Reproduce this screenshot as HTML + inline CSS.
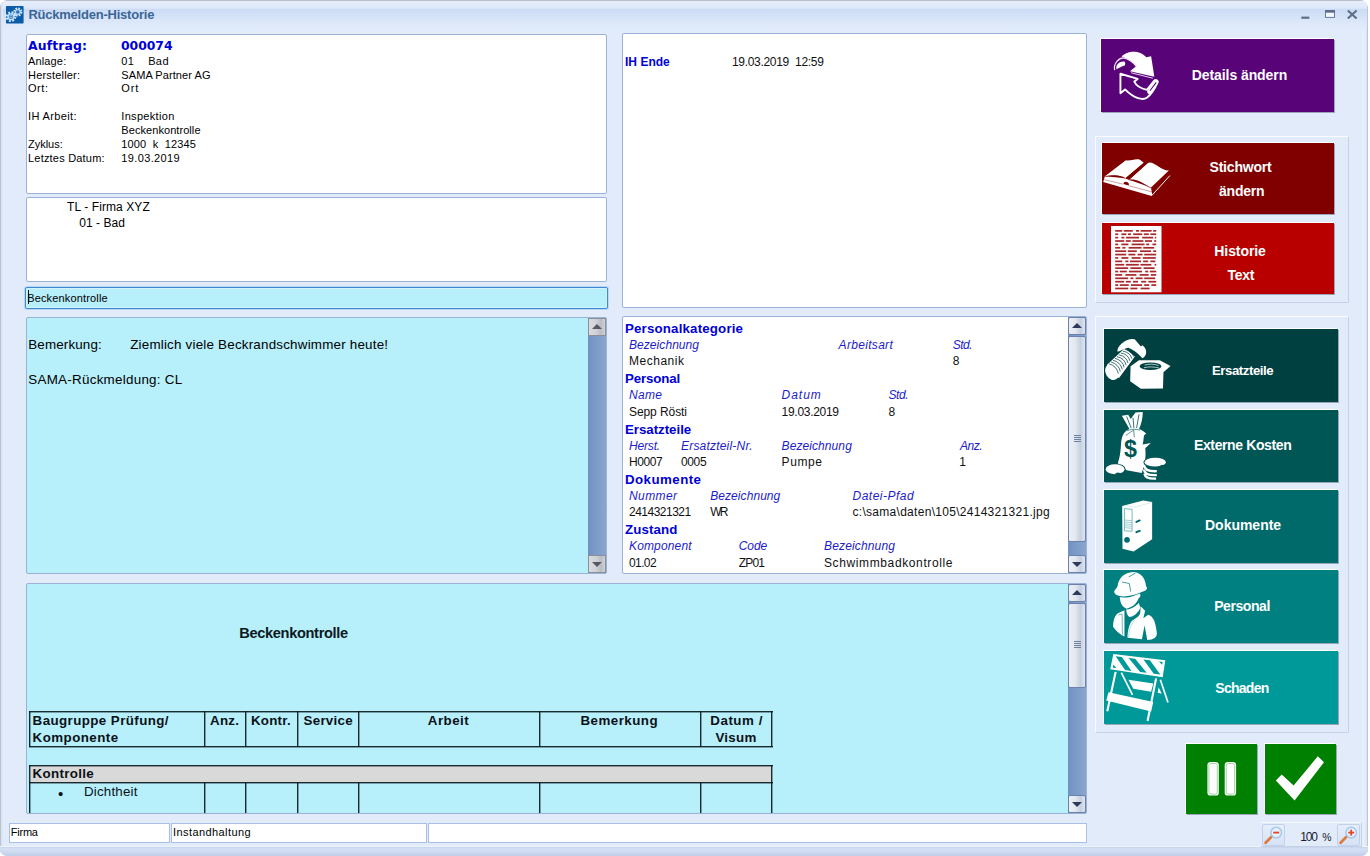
<!DOCTYPE html>
<html lang="de"><head><meta charset="utf-8"><title>Rückmelden-Historie</title>
<style>
*{box-sizing:border-box;margin:0;padding:0}
html,body{width:1370px;height:856px;overflow:hidden;background:#fff}
body{position:relative;font-family:"Liberation Sans",sans-serif;font-size:11px;color:#000}
.abs{position:absolute}
#win{position:absolute;left:0;top:0;width:1368px;height:856px;border-radius:8px 8px 7px 7px;background:#e1ebfa;overflow:hidden}
#tbar{position:absolute;left:0;top:0;width:1370px;height:32px;background:linear-gradient(#b9bec9 0,#b9bec9 1px,#e6eefb 1px,#e2ecfb 3px,#dfe9fa 8px,#cddcf5 9.5px,#d0dff6 13px,#dbe7f9 21px,#e1ebfa 30px)}
#lband{position:absolute;left:0;top:0;width:3px;height:856px;background:linear-gradient(90deg,#bbc4d6 0,#bbc4d6 1px,#d3ddef 1px,#dbe5f5 2px,#e1ebfa 3px)}
#rband{position:absolute;left:1361px;top:30px;width:7px;height:826px;background:linear-gradient(90deg,#e1ebfa 0,#e7effb 2px,#e2ebf8 5px,#d2dcee 6px,#bcc6d8 6px,#bcc6d8 7px)}
#bband{position:absolute;left:0;top:846px;width:1370px;height:10px;background:linear-gradient(#eef4fc 0,#eef4fc 1px,#c9d5ea 1px,#ccd8ee 2px,#d3e0f4 2px,#cddaf1 6px,#bfcde7 10px)}
#title{position:absolute;left:28px;top:7px;font-weight:bold;font-size:13px;line-height:16px;color:#3f6a9e;letter-spacing:-.1px;white-space:nowrap}
.panel{position:absolute;background:#fff;border:1px solid #9bb1d6;border-radius:2px}
.cy{background:#b7effb}
.t{position:absolute;white-space:pre;line-height:14px}
.tah{font-size:11px}
.seg{font-size:12px}
.blue{color:#0a0ac8}
.btn{position:absolute;color:#fff;font-weight:bold;font-size:13.5px;text-align:center;box-shadow:-1px -1px 0 #fff,1px 1px 0 #9aa6bb}
.btn span{position:absolute;left:0;width:100%;white-space:nowrap}
.grp{position:absolute;border:1px solid #c4d1e7;border-top-color:#fafcff;border-left-color:#fafcff;border-radius:2px}
.sb{position:absolute;width:18px;background:linear-gradient(90deg,#7091c1 0,#7b9ac7 40%,#89a6cf 100%)}
.sbb{position:absolute;left:0;width:18px;height:18px;border:1px solid #6b81ab;border-radius:2px;background:linear-gradient(90deg,#eceff5 0,#e3e7ef 40%,#c6d0e0 72%,#dfe4ee 100%)}
.sbg{position:absolute;left:0;width:18px;height:18px;border:1px solid #8b8f98;background:linear-gradient(90deg,#d9dbe0 0,#cfd1d6 45%,#b9bcc3 75%,#d0d2d8 100%)}
.tri{position:absolute;left:3px;width:0;height:0;border-left:5px solid transparent;border-right:5px solid transparent}
.st{position:absolute;top:823px;height:20px;background:#fff;border:1px solid #a9c0e4;font-size:11px;line-height:17px;padding-left:1px;white-space:nowrap}
table.rt{position:absolute;border-collapse:collapse;font-size:13.4px;line-height:17px}
table.rt td{border:1.4px solid #0c1a20;vertical-align:top;padding:1px 3px 0 3px;font-weight:bold;text-align:center;white-space:nowrap}
svg{position:absolute;overflow:visible}
</style></head>
<body>
<div id="win">
<div id="tbar"></div><div id="lband"></div><div id="rband"></div><div id="bband"></div><div class="abs" style="left:1367px;top:6px;width:1px;height:26px;background:#bcc6d8"></div>
<svg style="left:6.2px;top:6.3px" width="17.6" height="17.6" viewBox="0 0 18 18"><rect x="0" y="0" width="18" height="18" rx=".8" fill="#0a5ba8"/>
<circle cx="5.1" cy="10.9" r="4.2" fill="none" stroke="#cfe7fa" stroke-width="2.6" stroke-dasharray="1.9 1.4"/>
<circle cx="5.1" cy="10.9" r="3.6" fill="#c3e0f8"/><circle cx="5.1" cy="10.9" r="2.3" fill="#3d88cf"/><circle cx="5.1" cy="10.9" r="1.4" fill="#a9d2f4"/><circle cx="5.1" cy="10.9" r=".7" fill="#0a4f96"/>
<circle cx="12.1" cy="6.1" r="3.5" fill="none" stroke="#cfe7fa" stroke-width="2.4" stroke-dasharray="1.7 1.05"/>
<circle cx="12.1" cy="6.1" r="2.9" fill="#c3e0f8"/><circle cx="12.1" cy="6.1" r="1.9" fill="#3d88cf"/><rect x="11" y="5.7" width="2.2" height=".9" fill="#0a4f96"/></svg>
<div class="t" style="left:28.40px;top:6.00px;font-size:13px;line-height:17px;color:#3b6596;font-weight:bold;letter-spacing:-0.224px;">Rückmelden-Historie</div>
<svg style="left:1300px;top:8px" width="60" height="14" viewBox="0 0 60 14"><rect x="1.3" y="8.6" width="8" height="2.2" fill="#5f6e88"/>
<rect x="25.5" y="2.6" width="9" height="6.8" fill="#f4f8fe" stroke="#6b7b9a" stroke-width="1"/><rect x="25" y="2.1" width="10" height="2.6" fill="#5f6e88"/>
<path d="M47.8 2.4 L56.6 10.6 M56.6 2.4 L47.8 10.6" stroke="#5f6e88" stroke-width="2.1" fill="none"/></svg>
<div class="panel" style="left:26px;top:34px;width:581px;height:160px"></div>
<div class="panel" style="left:26px;top:197px;width:581px;height:85px"></div>
<div class="panel cy" style="left:25px;top:287px;width:583px;height:22px;border:1px solid #3f89d2;box-shadow:inset 0 0 0 1px #d2f3fc,0 0 0 1px #b9d6f3"></div>
<div class="panel cy" style="left:26px;top:317px;width:581px;height:257px"></div>
<div class="panel" style="left:622px;top:33px;width:465px;height:275px"></div>
<div class="panel" style="left:622px;top:316px;width:465px;height:258px"></div>
<div class="panel cy" style="left:26px;top:583px;width:1061px;height:231px"></div>
<div class="t" style="left:28.00px;top:37.81px;font-size:12.4px;line-height:16px;color:#0000d8;font-family:'DejaVu Sans','Liberation Sans',sans-serif;font-weight:bold;letter-spacing:0.133px;">Auftrag:</div>
<div class="t" style="left:121.00px;top:37.81px;font-size:12.4px;line-height:16px;color:#0000d8;font-family:'DejaVu Sans','Liberation Sans',sans-serif;font-weight:bold;letter-spacing:-0.034px;">000074</div>
<div class="t" style="left:28.00px;top:53.79px;font-size:11px;line-height:14px;color:#000;letter-spacing:0.148px;">Anlage:</div>
<div class="t" style="left:121.30px;top:53.79px;font-size:11px;line-height:14px;color:#000;letter-spacing:0.396px;">01    Bad</div>
<div class="t" style="left:28.00px;top:67.61px;font-size:11px;line-height:14px;color:#000;letter-spacing:0.187px;">Hersteller:</div>
<div class="t" style="left:121.30px;top:67.61px;font-size:11px;line-height:14px;color:#000;letter-spacing:0.083px;">SAMA Partner AG</div>
<div class="t" style="left:28.00px;top:81.43px;font-size:11px;line-height:14px;color:#000;letter-spacing:0.554px;">Ort:</div>
<div class="t" style="left:121.30px;top:81.43px;font-size:11px;line-height:14px;color:#000;letter-spacing:0.810px;">Ort</div>
<div class="t" style="left:28.00px;top:109.07px;font-size:11px;line-height:14px;color:#000;letter-spacing:0.373px;">IH Arbeit:</div>
<div class="t" style="left:121.30px;top:109.07px;font-size:11px;line-height:14px;color:#000;letter-spacing:0.317px;">Inspektion</div>
<div class="t" style="left:121.30px;top:122.89px;font-size:11px;line-height:14px;color:#000;letter-spacing:0.067px;">Beckenkontrolle</div>
<div class="t" style="left:28.00px;top:136.71px;font-size:11px;line-height:14px;color:#000;letter-spacing:-0.023px;">Zyklus:</div>
<div class="t" style="left:121.30px;top:136.71px;font-size:11px;line-height:14px;color:#000;letter-spacing:0.139px;">1000  k  12345</div>
<div class="t" style="left:28.00px;top:150.53px;font-size:11px;line-height:14px;color:#000;letter-spacing:0.202px;">Letztes Datum:</div>
<div class="t" style="left:121.30px;top:150.53px;font-size:11px;line-height:14px;color:#000;letter-spacing:0.372px;">19.03.2019</div>
<div class="t" style="left:67.10px;top:199.34px;font-size:12px;line-height:16px;color:#000;letter-spacing:0.088px;">TL - Firma XYZ</div>
<div class="t" style="left:79.20px;top:215.44px;font-size:12px;line-height:16px;color:#000;letter-spacing:0.063px;">01 - Bad</div>
<div class="abs" style="left:27px;top:289px;width:200px;height:17px;overflow:hidden"><div class="t" style="left:0.20px;top:1.79px;font-size:11px;line-height:14px;color:#000;letter-spacing:0.160px;">Beckenkontrolle</div>
</div>
<div class="abs" style="left:27.5px;top:290px;width:1.2px;height:14px;background:#141414"></div>
<div class="t" style="left:28.30px;top:336.36px;font-size:13.4px;line-height:17px;color:#000;letter-spacing:0.139px;">Bemerkung:</div>
<div class="t" style="left:130.20px;top:336.36px;font-size:13.4px;line-height:17px;color:#000;letter-spacing:0.205px;">Ziemlich viele Beckrandschwimmer heute!</div>
<div class="t" style="left:28.30px;top:370.56px;font-size:13.4px;line-height:17px;color:#000;letter-spacing:0.266px;">SAMA-Rückmeldung: CL</div>
<div class="t" style="left:625.00px;top:54.14px;font-size:12px;line-height:16px;color:#0000d8;font-weight:bold;letter-spacing:0.021px;">IH Ende</div>
<div class="t" style="left:731.90px;top:54.14px;font-size:12px;line-height:16px;color:#111;letter-spacing:-0.297px;">19.03.2019  12:59</div>
<div class="t" style="left:625.00px;top:319.99px;font-size:13.3px;line-height:17px;color:#0000d8;font-weight:bold;letter-spacing:0.168px;">Personalkategorie</div>
<div class="t" style="left:629.00px;top:337.14px;font-size:12px;line-height:16px;color:#1c1ccc;font-style:italic;letter-spacing:0.062px;">Bezeichnung</div>
<div class="t" style="left:629.00px;top:353.44px;font-size:12px;line-height:16px;color:#111;letter-spacing:0.517px;">Mechanik</div>
<div class="t" style="left:838.60px;top:337.14px;font-size:12px;line-height:16px;color:#1c1ccc;font-style:italic;letter-spacing:0.313px;">Arbeitsart</div>
<div class="t" style="left:952.80px;top:337.14px;font-size:12px;line-height:16px;color:#1c1ccc;font-style:italic;letter-spacing:-0.516px;">Std.</div>
<div class="t" style="left:952.80px;top:353.44px;font-size:12px;line-height:16px;color:#111;">8</div>
<div class="t" style="left:625.00px;top:370.29px;font-size:13.3px;line-height:17px;color:#0000d8;font-weight:bold;letter-spacing:-0.140px;">Personal</div>
<div class="t" style="left:629.00px;top:387.44px;font-size:12px;line-height:16px;color:#1c1ccc;font-style:italic;letter-spacing:0.328px;">Name</div>
<div class="t" style="left:629.00px;top:403.74px;font-size:12px;line-height:16px;color:#111;letter-spacing:-0.078px;">Sepp Rösti</div>
<div class="t" style="left:781.60px;top:387.44px;font-size:12px;line-height:16px;color:#1c1ccc;font-style:italic;letter-spacing:0.965px;">Datum</div>
<div class="t" style="left:781.60px;top:403.74px;font-size:12px;line-height:16px;color:#111;letter-spacing:-0.296px;">19.03.2019</div>
<div class="t" style="left:888.40px;top:387.44px;font-size:12px;line-height:16px;color:#1c1ccc;font-style:italic;letter-spacing:-0.383px;">Std.</div>
<div class="t" style="left:888.40px;top:403.74px;font-size:12px;line-height:16px;color:#111;">8</div>
<div class="t" style="left:625.00px;top:420.59px;font-size:13.3px;line-height:17px;color:#0000d8;font-weight:bold;letter-spacing:-0.033px;">Ersatzteile</div>
<div class="t" style="left:629.00px;top:437.74px;font-size:12px;line-height:16px;color:#1c1ccc;font-style:italic;letter-spacing:-0.161px;">Herst.</div>
<div class="t" style="left:629.00px;top:454.04px;font-size:12px;line-height:16px;color:#111;letter-spacing:-0.391px;">H0007</div>
<div class="t" style="left:681.00px;top:437.74px;font-size:12px;line-height:16px;color:#1c1ccc;font-style:italic;letter-spacing:0.201px;">Ersatzteil-Nr.</div>
<div class="t" style="left:681.00px;top:454.04px;font-size:12px;line-height:16px;color:#111;letter-spacing:-0.367px;">0005</div>
<div class="t" style="left:781.60px;top:437.74px;font-size:12px;line-height:16px;color:#1c1ccc;font-style:italic;letter-spacing:0.082px;">Bezeichnung</div>
<div class="t" style="left:781.60px;top:454.04px;font-size:12px;line-height:16px;color:#111;letter-spacing:0.571px;">Pumpe</div>
<div class="t" style="left:959.90px;top:437.74px;font-size:12px;line-height:16px;color:#1c1ccc;font-style:italic;letter-spacing:-0.471px;">Anz.</div>
<div class="t" style="left:959.30px;top:454.04px;font-size:12px;line-height:16px;color:#111;">1</div>
<div class="t" style="left:625.00px;top:470.89px;font-size:13.3px;line-height:17px;color:#0000d8;font-weight:bold;letter-spacing:0.448px;">Dokumente</div>
<div class="t" style="left:629.00px;top:488.04px;font-size:12px;line-height:16px;color:#1c1ccc;font-style:italic;letter-spacing:0.397px;">Nummer</div>
<div class="t" style="left:629.00px;top:504.34px;font-size:12px;line-height:16px;color:#111;letter-spacing:-0.505px;">2414321321</div>
<div class="t" style="left:710.20px;top:488.04px;font-size:12px;line-height:16px;color:#1c1ccc;font-style:italic;letter-spacing:0.072px;">Bezeichnung</div>
<div class="t" style="left:710.20px;top:504.34px;font-size:12px;line-height:16px;color:#111;letter-spacing:-1.692px;">WR</div>
<div class="t" style="left:852.50px;top:488.04px;font-size:12px;line-height:16px;color:#1c1ccc;font-style:italic;letter-spacing:0.488px;">Datei-Pfad</div>
<div class="t" style="left:852.50px;top:504.34px;font-size:12px;line-height:16px;color:#111;letter-spacing:0.289px;">c:\sama\daten\105\2414321321.jpg</div>
<div class="t" style="left:625.00px;top:521.19px;font-size:13.3px;line-height:17px;color:#0000d8;font-weight:bold;letter-spacing:0.113px;">Zustand</div>
<div class="t" style="left:629.00px;top:538.34px;font-size:12px;line-height:16px;color:#1c1ccc;font-style:italic;letter-spacing:0.150px;">Komponent</div>
<div class="t" style="left:629.00px;top:554.64px;font-size:12px;line-height:16px;color:#111;letter-spacing:-0.606px;">01.02</div>
<div class="t" style="left:738.70px;top:538.34px;font-size:12px;line-height:16px;color:#1c1ccc;font-style:italic;letter-spacing:-0.064px;">Code</div>
<div class="t" style="left:738.70px;top:554.64px;font-size:12px;line-height:16px;color:#111;letter-spacing:-0.793px;">ZP01</div>
<div class="t" style="left:824.00px;top:538.34px;font-size:12px;line-height:16px;color:#1c1ccc;font-style:italic;letter-spacing:0.152px;">Bezeichnung</div>
<div class="t" style="left:824.00px;top:554.64px;font-size:12px;line-height:16px;color:#111;letter-spacing:0.618px;">Schwimmbadkontrolle</div>
<div class="t" style="left:239.20px;top:624.14px;font-size:14.6px;line-height:19px;color:#0a1a22;font-weight:bold;letter-spacing:-0.328px;">Beckenkontrolle</div>
<div class="abs" style="left:30px;top:766px;width:741px;height:17px;background:#d9d9d9"></div>
<div class="abs" style="left:29px;top:711px;width:744px;height:2px;background:linear-gradient(rgba(12,26,32,.92) 50%,rgba(12,26,32,.38) 50%)"></div>
<div class="abs" style="left:29px;top:746px;width:744px;height:2px;background:linear-gradient(rgba(12,26,32,.92) 50%,rgba(12,26,32,.38) 50%)"></div>
<div class="abs" style="left:29px;top:765px;width:744px;height:2px;background:linear-gradient(rgba(12,26,32,.92) 50%,rgba(12,26,32,.38) 50%)"></div>
<div class="abs" style="left:29px;top:782px;width:744px;height:2px;background:linear-gradient(rgba(12,26,32,.92) 50%,rgba(12,26,32,.38) 50%)"></div>
<div class="abs" style="left:29px;top:711px;width:2px;height:36px;background:linear-gradient(90deg,rgba(12,26,32,.92) 50%,rgba(12,26,32,.38) 50%)"></div>
<div class="abs" style="left:204px;top:711px;width:2px;height:36px;background:linear-gradient(90deg,rgba(12,26,32,.92) 50%,rgba(12,26,32,.38) 50%)"></div>
<div class="abs" style="left:245px;top:711px;width:2px;height:36px;background:linear-gradient(90deg,rgba(12,26,32,.92) 50%,rgba(12,26,32,.38) 50%)"></div>
<div class="abs" style="left:297px;top:711px;width:2px;height:36px;background:linear-gradient(90deg,rgba(12,26,32,.92) 50%,rgba(12,26,32,.38) 50%)"></div>
<div class="abs" style="left:358px;top:711px;width:2px;height:36px;background:linear-gradient(90deg,rgba(12,26,32,.92) 50%,rgba(12,26,32,.38) 50%)"></div>
<div class="abs" style="left:539px;top:711px;width:2px;height:36px;background:linear-gradient(90deg,rgba(12,26,32,.92) 50%,rgba(12,26,32,.38) 50%)"></div>
<div class="abs" style="left:700px;top:711px;width:2px;height:36px;background:linear-gradient(90deg,rgba(12,26,32,.92) 50%,rgba(12,26,32,.38) 50%)"></div>
<div class="abs" style="left:771px;top:711px;width:2px;height:36px;background:linear-gradient(90deg,rgba(12,26,32,.92) 50%,rgba(12,26,32,.38) 50%)"></div>
<div class="abs" style="left:29px;top:765px;width:2px;height:18px;background:linear-gradient(90deg,rgba(12,26,32,.92) 50%,rgba(12,26,32,.38) 50%)"></div>
<div class="abs" style="left:771px;top:765px;width:2px;height:18px;background:linear-gradient(90deg,rgba(12,26,32,.92) 50%,rgba(12,26,32,.38) 50%)"></div>
<div class="abs" style="left:29px;top:782px;width:2px;height:31px;background:linear-gradient(90deg,rgba(12,26,32,.92) 50%,rgba(12,26,32,.38) 50%)"></div>
<div class="abs" style="left:204px;top:782px;width:2px;height:31px;background:linear-gradient(90deg,rgba(12,26,32,.92) 50%,rgba(12,26,32,.38) 50%)"></div>
<div class="abs" style="left:245px;top:782px;width:2px;height:31px;background:linear-gradient(90deg,rgba(12,26,32,.92) 50%,rgba(12,26,32,.38) 50%)"></div>
<div class="abs" style="left:297px;top:782px;width:2px;height:31px;background:linear-gradient(90deg,rgba(12,26,32,.92) 50%,rgba(12,26,32,.38) 50%)"></div>
<div class="abs" style="left:358px;top:782px;width:2px;height:31px;background:linear-gradient(90deg,rgba(12,26,32,.92) 50%,rgba(12,26,32,.38) 50%)"></div>
<div class="abs" style="left:539px;top:782px;width:2px;height:31px;background:linear-gradient(90deg,rgba(12,26,32,.92) 50%,rgba(12,26,32,.38) 50%)"></div>
<div class="abs" style="left:700px;top:782px;width:2px;height:31px;background:linear-gradient(90deg,rgba(12,26,32,.92) 50%,rgba(12,26,32,.38) 50%)"></div>
<div class="abs" style="left:771px;top:782px;width:2px;height:31px;background:linear-gradient(90deg,rgba(12,26,32,.92) 50%,rgba(12,26,32,.38) 50%)"></div>
<div class="t" style="left:32.60px;top:711.87px;font-size:13.35px;line-height:17px;color:#0a1218;font-weight:bold;letter-spacing:0.409px;">Baugruppe Prüfung/</div>
<div class="t" style="left:32.60px;top:729.07px;font-size:13.35px;line-height:17px;color:#0a1218;font-weight:bold;letter-spacing:0.435px;">Komponente</div>
<div class="t" style="left:210.10px;top:711.87px;font-size:13.35px;line-height:17px;color:#0a1218;font-weight:bold;letter-spacing:0.239px;">Anz.</div>
<div class="t" style="left:251.00px;top:711.87px;font-size:13.35px;line-height:17px;color:#0a1218;font-weight:bold;letter-spacing:0.226px;">Kontr.</div>
<div class="t" style="left:303.60px;top:711.87px;font-size:13.35px;line-height:17px;color:#0a1218;font-weight:bold;letter-spacing:0.248px;">Service</div>
<div class="t" style="left:427.80px;top:711.87px;font-size:13.35px;line-height:17px;color:#0a1218;font-weight:bold;letter-spacing:0.466px;">Arbeit</div>
<div class="t" style="left:580.50px;top:711.87px;font-size:13.35px;line-height:17px;color:#0a1218;font-weight:bold;letter-spacing:0.458px;">Bemerkung</div>
<div class="t" style="left:710.30px;top:711.87px;font-size:13.35px;line-height:17px;color:#0a1218;font-weight:bold;letter-spacing:0.524px;">Datum /</div>
<div class="t" style="left:715.40px;top:729.07px;font-size:13.35px;line-height:17px;color:#0a1218;font-weight:bold;letter-spacing:0.269px;">Visum</div>
<div class="t" style="left:32.60px;top:764.97px;font-size:13.35px;line-height:17px;color:#0a1218;font-weight:bold;letter-spacing:0.301px;">Kontrolle</div>
<div class="t" style="left:84.00px;top:783.37px;font-size:13.35px;line-height:17px;color:#0a1218;letter-spacing:0.182px;">Dichtheit</div>
<div class="t" style="left:58.10px;top:783.90px;font-size:15px;line-height:20px;color:#0a1218;">•</div>
<div class="abs" style="left:20px;top:814px;width:1072px;height:9px;background:#e1ebfa"></div>
<div class="abs" style="left:27px;top:813px;width:1059px;height:1px;background:#9bb1d6"></div>
<div class="sb" style="left:1068px;top:317px;height:256px"><div class="sbb" style="top:0"><div class="tri" style="top:5px;border-bottom:5px solid #2d3a5e"></div></div><div class="sbb" style="top:19px;height:206px"><div class="abs" style="left:5px;top:98px;width:7px;height:7px;background:repeating-linear-gradient(#6f7f9f 0,#6f7f9f 1px,transparent 1px,transparent 2px)"></div></div><div class="sbb" style="top:238px"><div class="tri" style="top:6px;border-top:5px solid #2d3a5e"></div></div></div>
<div class="sb" style="left:1068px;top:584px;height:229px"><div class="sbb" style="top:0"><div class="tri" style="top:5px;border-bottom:5px solid #2d3a5e"></div></div><div class="sbb" style="top:19px;height:85px"><div class="abs" style="left:5px;top:37px;width:7px;height:7px;background:repeating-linear-gradient(#6f7f9f 0,#6f7f9f 1px,transparent 1px,transparent 2px)"></div></div><div class="sbb" style="top:211px"><div class="tri" style="top:6px;border-top:5px solid #2d3a5e"></div></div></div>
<div class="sb" style="left:588px;top:318px;height:255px;width:18px"><div class="sbg" style="top:0"><div class="tri" style="left:3px;top:5px;border-bottom:5px solid #555960"></div></div><div class="sbg" style="top:237px"><div class="tri" style="left:3px;top:6px;border-top:5px solid #555960"></div></div></div>
<div class="st" style="left:9px;width:161px"></div>
<div class="st" style="left:171px;width:256px"></div>
<div class="t" style="left:10.80px;top:825.39px;font-size:11px;line-height:14px;color:#000;letter-spacing:-0.229px;">Firma</div>
<div class="t" style="left:173.00px;top:825.39px;font-size:11px;line-height:14px;color:#000;letter-spacing:0.418px;">Instandhaltung</div>
<div class="st" style="left:428px;width:659px"></div>
<div class="abs" style="left:1261px;top:822px;width:101px;height:25px;border-right:1px solid #c3d0e8;border-bottom:1px solid #c3d0e8;border-top:1px solid #f2f6fd"></div>
<div class="abs" style="left:1262px;top:824px;width:23px;height:22px;border:1px solid #c2d0ea;border-radius:2px;background:linear-gradient(#e6eefb,#d6e2f5)"></div>
<div class="abs" style="left:1337px;top:824px;width:23px;height:22px;border:1px solid #c2d0ea;border-radius:2px;background:linear-gradient(#e6eefb,#d6e2f5)"></div>
<div class="t" style="left:1300.30px;top:829.04px;font-size:12px;line-height:16px;color:#1a1a2a;letter-spacing:-1.208px;">100</div>
<div class="t" style="left:1322.20px;top:830.60px;font-size:10.4px;line-height:14px;color:#1a1a2a;">%</div>
<svg style="left:1262px;top:824px" width="23" height="22" viewBox="0 0 23 22"><path d="M3.6 18.8 L9.6 12.6" stroke="#dd7a3c" stroke-width="2.8" stroke-linecap="round"/><circle cx="14.2" cy="8.6" r="5.3" fill="#e6f1fb" stroke="#a6c8ea" stroke-width="1.5"/><rect x="11.2" y="7.7" width="6" height="1.8" fill="#e2472a"/></svg>
<svg style="left:1337px;top:824px" width="23" height="22" viewBox="0 0 23 22"><path d="M3.6 18.8 L9.6 12.6" stroke="#dd7a3c" stroke-width="2.8" stroke-linecap="round"/><circle cx="14.2" cy="8.6" r="5.3" fill="#e6f1fb" stroke="#a6c8ea" stroke-width="1.5"/><rect x="11.2" y="7.7" width="6" height="1.8" fill="#e2472a"/><rect x="13.3" y="5.6" width="1.8" height="6" fill="#e2472a"/></svg>
<div class="grp" style="left:1095px;top:136px;width:254px;height:167px"></div>
<div class="grp" style="left:1095px;top:316px;width:254px;height:417px"></div>
<div class="btn" style="left:1101px;top:39px;width:233px;height:73px;background:#580478"></div>
<div class="btn" style="left:1102px;top:143px;width:232px;height:71px;background:#800000"></div>
<div class="btn" style="left:1102px;top:223px;width:232px;height:71px;background:#b80000"></div>
<div class="btn" style="left:1104px;top:329px;width:234px;height:73px;background:#004040"></div>
<div class="btn" style="left:1104px;top:410px;width:234px;height:72px;background:#005555"></div>
<div class="btn" style="left:1104px;top:490px;width:234px;height:73px;background:#006a6a"></div>
<div class="btn" style="left:1104px;top:570px;width:234px;height:73px;background:#008080"></div>
<div class="btn" style="left:1104px;top:651px;width:234px;height:73px;background:#009999"></div>
<div class="btn" style="left:1186px;top:744px;width:71px;height:70px;background:#008000"></div>
<div class="btn" style="left:1265px;top:744px;width:71px;height:70px;background:#008000"></div>
<div class="t" style="left:1191.80px;top:66.25px;font-size:14px;line-height:18px;color:#fff;font-weight:bold;letter-spacing:-0.083px;">Details ändern</div>
<div class="t" style="left:1209.50px;top:158.05px;font-size:14px;line-height:18px;color:#fff;font-weight:bold;letter-spacing:-0.198px;">Stichwort</div>
<div class="t" style="left:1219.00px;top:182.45px;font-size:14px;line-height:18px;color:#fff;font-weight:bold;letter-spacing:-0.215px;">ändern</div>
<div class="t" style="left:1214.30px;top:241.75px;font-size:14px;line-height:18px;color:#fff;font-weight:bold;letter-spacing:-0.075px;">Historie</div>
<div class="t" style="left:1227.40px;top:266.15px;font-size:14px;line-height:18px;color:#fff;font-weight:bold;letter-spacing:-0.216px;">Text</div>
<div class="t" style="left:1212.00px;top:361.73px;font-size:13.2px;line-height:17px;color:#fff;font-weight:bold;letter-spacing:-0.433px;">Ersatzteile</div>
<div class="t" style="left:1194.00px;top:436.05px;font-size:14px;line-height:18px;color:#fff;font-weight:bold;letter-spacing:-0.385px;">Externe Kosten</div>
<div class="t" style="left:1205.00px;top:515.55px;font-size:14px;line-height:18px;color:#fff;font-weight:bold;letter-spacing:-0.016px;">Dokumente</div>
<div class="t" style="left:1214.20px;top:596.85px;font-size:14px;line-height:18px;color:#fff;font-weight:bold;letter-spacing:-0.434px;">Personal</div>
<div class="t" style="left:1215.30px;top:679.25px;font-size:14px;line-height:18px;color:#fff;font-weight:bold;letter-spacing:-0.725px;">Schaden</div>
<svg style="left:1105px;top:45px" width="60" height="60" viewBox="0 0 856 856">
<path d="M236 164 C300 92 480 50 590 176 L658 160 L704 452 L356 374 L448 300 C400 240 330 192 236 164 Z" fill="#fff"/>
<path d="M164 346 C148 282 204 224 276 236 C292 250 292 276 282 292 C236 306 200 326 164 346 Z" fill="#fff"/>
<path d="M138 360 C118 262 196 186 262 184 C330 198 404 250 446 304" fill="none" stroke="#f4e9f8" stroke-width="17"/>
<path d="M372 396 L684 474" stroke="#f1e2f6" stroke-width="13" fill="none"/>
<path d="M220 410 L466 484 L418 522 C446 584 520 622 598 640 L700 512 C722 486 768 506 746 542 C720 600 662 700 600 750 C540 792 420 770 286 634 L220 688 Z" fill="none" stroke="#fff" stroke-width="27" stroke-linejoin="round"/>
<path d="M630 668 L734 528" stroke="#fff" stroke-width="58" stroke-linecap="round" fill="none"/>
<path d="M646 646 L726 540" stroke="#580478" stroke-width="15" stroke-linecap="round" fill="none"/>
</svg>
<svg style="left:1100px;top:150px" width="75" height="55" viewBox="0 0 1167 856">
<path d="M50 498 L76 408 L396 438 L452 462 L794 584 L812 700 L804 716 Z" fill="#fff"/>
<path d="M78 408 L402 160 C470 178 540 128 622 150 L682 198 L396 438 C300 378 200 386 78 408 Z" fill="#fff"/>
<path d="M452 462 L742 204 C820 150 940 320 1072 318 L794 584 C690 545 600 440 452 462 Z" fill="#fff"/>
<path d="M682 198 L744 202 L452 464 L396 440 Z" fill="#800000"/>
<path d="M80 414 C200 392 300 392 394 446 M454 470 C600 448 690 548 792 592" stroke="#800000" stroke-width="8" fill="none"/>
<path d="M70 462 L356 532 M450 556 L800 650" stroke="#800000" stroke-width="6" fill="none"/>
<path d="M362 530 A44 44 0 0 1 448 552 Z" fill="#800000"/>
<path d="M806 708 L1088 398" stroke="#fff" stroke-width="15" fill="none"/>
</svg>
<svg style="left:0px;top:0px" width="1370" height="856" viewBox="0 0 1370 856"><rect x="1111" y="226" width="50.5" height="66.3" fill="#fff"/><rect x="1115.2" y="230.00" width="7.0" height="1.7" fill="#a8282a"/><rect x="1123.8" y="230.00" width="9.0" height="1.7" fill="#a8282a"/><rect x="1136.0" y="230.00" width="3.0" height="1.7" fill="#a8282a"/><rect x="1140.6" y="230.00" width="11.0" height="1.7" fill="#a8282a"/><rect x="1153.2" y="230.00" width="3.0" height="1.7" fill="#a8282a"/><rect x="1115.2" y="233.39" width="3.0" height="1.7" fill="#a8282a"/><rect x="1121.4" y="233.39" width="5.0" height="1.7" fill="#a8282a"/><rect x="1128.0" y="233.39" width="3.0" height="1.7" fill="#a8282a"/><rect x="1133.2" y="233.39" width="9.0" height="1.7" fill="#a8282a"/><rect x="1143.8" y="233.39" width="5.0" height="1.7" fill="#a8282a"/><rect x="1150.4" y="233.39" width="5.8" height="1.7" fill="#a8282a"/><rect x="1115.2" y="236.78" width="3.0" height="1.7" fill="#a8282a"/><rect x="1121.4" y="236.78" width="3.0" height="1.7" fill="#a8282a"/><rect x="1126.0" y="236.78" width="13.0" height="1.7" fill="#a8282a"/><rect x="1142.2" y="236.78" width="11.0" height="1.7" fill="#a8282a"/><rect x="1154.8" y="236.78" width="1.4" height="1.7" fill="#a8282a"/><rect x="1115.2" y="240.17" width="9.0" height="1.7" fill="#a8282a"/><rect x="1125.8" y="240.17" width="5.0" height="1.7" fill="#a8282a"/><rect x="1132.4" y="240.17" width="11.0" height="1.7" fill="#a8282a"/><rect x="1145.0" y="240.17" width="7.0" height="1.7" fill="#a8282a"/><rect x="1154.2" y="240.17" width="2.0" height="1.7" fill="#a8282a"/><rect x="1115.2" y="243.56" width="3.0" height="1.7" fill="#a8282a"/><rect x="1121.4" y="243.56" width="7.0" height="1.7" fill="#a8282a"/><rect x="1131.6" y="243.56" width="13.0" height="1.7" fill="#a8282a"/><rect x="1146.2" y="243.56" width="3.0" height="1.7" fill="#a8282a"/><rect x="1152.4" y="243.56" width="3.8" height="1.7" fill="#a8282a"/><rect x="1115.2" y="246.95" width="5.0" height="1.7" fill="#a8282a"/><rect x="1122.4" y="246.95" width="3.0" height="1.7" fill="#a8282a"/><rect x="1128.6" y="246.95" width="13.0" height="1.7" fill="#a8282a"/><rect x="1143.2" y="246.95" width="11.0" height="1.7" fill="#a8282a"/><rect x="1115.2" y="250.34" width="11.0" height="1.7" fill="#a8282a"/><rect x="1127.8" y="250.34" width="9.0" height="1.7" fill="#a8282a"/><rect x="1140.0" y="250.34" width="11.0" height="1.7" fill="#a8282a"/><rect x="1153.2" y="250.34" width="3.0" height="1.7" fill="#a8282a"/><rect x="1115.2" y="253.73" width="11.0" height="1.7" fill="#a8282a"/><rect x="1128.4" y="253.73" width="7.0" height="1.7" fill="#a8282a"/><rect x="1137.6" y="253.73" width="5.0" height="1.7" fill="#a8282a"/><rect x="1144.2" y="253.73" width="12.0" height="1.7" fill="#a8282a"/><rect x="1115.2" y="257.12" width="3.0" height="1.7" fill="#a8282a"/><rect x="1121.4" y="257.12" width="7.0" height="1.7" fill="#a8282a"/><rect x="1131.6" y="257.12" width="9.0" height="1.7" fill="#a8282a"/><rect x="1142.8" y="257.12" width="13.0" height="1.7" fill="#a8282a"/><rect x="1115.2" y="260.51" width="7.0" height="1.7" fill="#a8282a"/><rect x="1125.4" y="260.51" width="3.0" height="1.7" fill="#a8282a"/><rect x="1130.0" y="260.51" width="11.0" height="1.7" fill="#a8282a"/><rect x="1143.2" y="260.51" width="5.0" height="1.7" fill="#a8282a"/><rect x="1150.4" y="260.51" width="5.0" height="1.7" fill="#a8282a"/><rect x="1115.2" y="263.90" width="9.0" height="1.7" fill="#a8282a"/><rect x="1125.8" y="263.90" width="13.0" height="1.7" fill="#a8282a"/><rect x="1140.4" y="263.90" width="11.0" height="1.7" fill="#a8282a"/><rect x="1154.6" y="263.90" width="1.6" height="1.7" fill="#a8282a"/><rect x="1115.2" y="267.29" width="13.0" height="1.7" fill="#a8282a"/><rect x="1130.4" y="267.29" width="11.0" height="1.7" fill="#a8282a"/><rect x="1143.6" y="267.29" width="11.0" height="1.7" fill="#a8282a"/><rect x="1115.2" y="270.68" width="3.0" height="1.7" fill="#a8282a"/><rect x="1119.8" y="270.68" width="7.0" height="1.7" fill="#a8282a"/><rect x="1129.0" y="270.68" width="13.0" height="1.7" fill="#a8282a"/><rect x="1145.2" y="270.68" width="3.0" height="1.7" fill="#a8282a"/><rect x="1149.8" y="270.68" width="6.4" height="1.7" fill="#a8282a"/><rect x="1115.2" y="274.07" width="7.0" height="1.7" fill="#a8282a"/><rect x="1125.4" y="274.07" width="11.0" height="1.7" fill="#a8282a"/><rect x="1139.6" y="274.07" width="9.0" height="1.7" fill="#a8282a"/><rect x="1150.8" y="274.07" width="5.4" height="1.7" fill="#a8282a"/><rect x="1115.2" y="277.46" width="13.0" height="1.7" fill="#a8282a"/><rect x="1130.4" y="277.46" width="3.0" height="1.7" fill="#a8282a"/><rect x="1135.6" y="277.46" width="7.0" height="1.7" fill="#a8282a"/><rect x="1144.2" y="277.46" width="11.0" height="1.7" fill="#a8282a"/><rect x="1115.2" y="280.85" width="9.0" height="1.7" fill="#a8282a"/><rect x="1125.8" y="280.85" width="5.0" height="1.7" fill="#a8282a"/><rect x="1133.0" y="280.85" width="5.0" height="1.7" fill="#a8282a"/><rect x="1141.2" y="280.85" width="5.0" height="1.7" fill="#a8282a"/><rect x="1148.4" y="280.85" width="7.8" height="1.7" fill="#a8282a"/><rect x="1115.2" y="284.24" width="3.0" height="1.7" fill="#a8282a"/><rect x="1119.8" y="284.24" width="9.0" height="1.7" fill="#a8282a"/><rect x="1131.0" y="284.24" width="11.0" height="1.7" fill="#a8282a"/><rect x="1144.2" y="284.24" width="5.0" height="1.7" fill="#a8282a"/><rect x="1151.4" y="284.24" width="4.8" height="1.7" fill="#a8282a"/><rect x="1115.2" y="287.63" width="13.0" height="1.7" fill="#a8282a"/><rect x="1130.4" y="287.63" width="7.0" height="1.7" fill="#a8282a"/><rect x="1140.6" y="287.63" width="9.0" height="1.7" fill="#a8282a"/></svg>
<svg style="left:1100px;top:332px" width="75" height="63" viewBox="0 0 1019 856">
<path d="M92 448 L336 222 L474 332 L256 628 Z" fill="#fff"/>
<ellipse cx="162" cy="545" rx="86" ry="112" transform="rotate(-30 162 545)" fill="#fff"/>
<path d="M124 432 Q229 465 250 566" stroke="#004040" stroke-width="10" fill="none"/><path d="M150 408 Q255 438 276 537" stroke="#004040" stroke-width="10" fill="none"/><path d="M177 383 Q282 412 302 508" stroke="#004040" stroke-width="10" fill="none"/><path d="M204 358 Q308 385 328 479" stroke="#004040" stroke-width="10" fill="none"/><path d="M230 334 Q334 358 354 450" stroke="#004040" stroke-width="10" fill="none"/><path d="M256 310 Q360 331 380 421" stroke="#004040" stroke-width="10" fill="none"/><path d="M283 285 Q386 304 406 392" stroke="#004040" stroke-width="10" fill="none"/><path d="M310 260 Q413 278 432 363" stroke="#004040" stroke-width="10" fill="none"/><path d="M336 236 Q439 251 458 334" stroke="#004040" stroke-width="10" fill="none"/>
<path d="M238 268 C224 200 330 100 430 94 L472 100 L556 196 L576 180 C646 230 644 314 580 358 C540 318 470 244 384 214 C330 222 278 262 238 268 Z" fill="#fff"/>
<path d="M415 466 L530 383 L812 383 L958 462 L862 546 L856 766 L555 770 L410 668 Z" fill="#fff"/>
<ellipse cx="686" cy="466" rx="148" ry="52" fill="#004040"/>
<path d="M606 450 C660 432 740 432 796 456 M596 486 C660 468 740 472 804 490" stroke="#eaf6f6" stroke-width="10" fill="none"/>
</svg>
<svg style="left:1100px;top:408px" width="75" height="76" viewBox="0 0 845 856">
<path d="M330 236 C262 262 240 330 236 420 C230 520 216 580 200 622 L300 700 L470 732 C500 650 522 560 510 452 L572 394 L480 412 C500 350 480 300 522 290 C480 250 452 240 440 236 Z" fill="#fff"/>
<path d="M332 236 L246 86 L318 76 L346 124 L400 50 L482 44 C482 120 462 190 440 236 Z" fill="#fff"/>
<path d="M300 96 L352 226 M372 110 L382 228 M440 70 L412 226" stroke="#005555" stroke-width="9" fill="none"/>
<path d="M300 258 C350 236 410 236 450 250 M290 310 C330 280 360 262 380 250 L386 330" stroke="#005555" stroke-width="7" fill="none"/>
<text x="342" y="548" font-family="Liberation Sans, sans-serif" font-weight="bold" font-size="262" fill="#005555" text-anchor="middle">$</text>
<ellipse cx="170" cy="690" rx="118" ry="66" fill="#005555"/><ellipse cx="170" cy="690" rx="106" ry="56" fill="#fff"/>
<path d="M150 752 L196 726 L262 738 Z" fill="#005555"/>
<ellipse cx="622" cy="610" rx="132" ry="60" fill="#005555"/><ellipse cx="622" cy="610" rx="120" ry="50" fill="#fff"/>
<path d="M640 668 L700 640 L760 660 Z" fill="#005555"/>
<path d="M496 640 C500 700 560 716 640 712 M494 690 C500 746 560 760 640 756 M500 740 C510 786 560 800 632 796" stroke="#fff" stroke-width="26" fill="none"/>
</svg>
<svg style="left:1110px;top:495px" width="55" height="63" viewBox="0 0 747 856">
<path d="M165 150 L450 76 L572 96 L572 600 L320 766 L170 730 Z" fill="#fff"/>
<path d="M196 140 L330 166 L566 100" stroke="#bfe0e0" stroke-width="8" fill="none"/>
<rect x="196" y="186" width="104" height="300" fill="none" stroke="#3f9a9a" stroke-width="9" transform="skewY(4) translate(0,-14)"/>
<path d="M200 340 L298 348 M200 366 L298 374 M200 392 L298 400 M200 418 L298 426 M200 444 L298 452" stroke="#4fa4a4" stroke-width="7"/>
<circle cx="231" cy="610" r="38" fill="#006a6a"/>
<path d="M358 366 L404 346 M358 506 L404 486" stroke="#006a6a" stroke-width="26" stroke-linecap="round"/>
</svg>
<svg style="left:1105px;top:568px" width="60" height="77" viewBox="0 0 667 856">
<path d="M105 276 C94 250 130 230 140 200 C150 110 220 50 310 45 C400 45 450 120 456 200 C472 216 470 240 450 250 C380 282 300 312 200 316 C150 316 114 300 105 276 Z" fill="#fff"/>
<path d="M190 156 L270 172 L286 262 M262 100 L340 56" stroke="#008080" stroke-width="8" fill="none"/>
<path d="M164 326 C170 400 200 440 240 452 C300 440 350 400 372 340 C392 330 402 300 386 284 L350 296 C300 322 230 332 164 326 Z" fill="#fff"/>
<path d="M236 462 C300 456 350 420 376 386 L392 442 C370 500 320 540 270 546 C246 530 236 490 236 462 Z" fill="#fff"/>
<path d="M396 426 L446 476 L426 560 L480 520 C540 540 562 600 576 720 C582 770 540 800 470 800 L440 640 L410 792 L250 776 C250 700 270 620 300 586 C340 560 380 540 392 500 Z" fill="#fff"/>
<path d="M216 470 L216 762 C170 740 110 690 90 650 C90 580 110 520 150 500 Z" fill="#fff"/>
<path d="M150 522 L190 512 L194 742" stroke="#008080" stroke-width="6" fill="none"/>
<path d="M262 770 C266 690 290 620 330 580" stroke="#9fd4d4" stroke-width="8" fill="none"/>
</svg>
<svg style="left:1100px;top:650px" width="75" height="76" viewBox="0 0 845 856">
<path d="M176 246 L82 690 M632 320 L536 800" stroke="#fff" stroke-width="24"/>
<path d="M240 256 L366 506 M680 336 L766 592" stroke="#fff" stroke-width="19"/>
<path d="M150 45 L736 116 L706 306 L116 216 Z" fill="#fff"/>
<path d="M176 70 L246 80 L356 236 L282 226 Z M322 90 L396 98 L526 256 L452 248 Z M490 106 L562 116 L680 276 L606 268 Z M150 164 L186 202 L146 200 Z M664 130 L706 136 L700 166 Z" fill="#009999"/>
<path d="M320 336 L600 376 L576 470 L376 436 Z" fill="#fff"/>
<path d="M96 476 L600 586 L576 692 L70 570 Z" fill="#fff"/>
<path d="M660 420 L696 492 L650 482 Z" fill="#fff"/>
</svg>
<svg style="left:0px;top:0px" width="1370" height="856" viewBox="0 0 1370 856">
<rect x="1207.4" y="762" width="11.4" height="33.6" rx="3.2" fill="#fff"/><rect x="1208.9" y="763.5" width="8.4" height="30.6" rx="2" fill="none" stroke="#7fc47f" stroke-width=".7"/>
<rect x="1224.7" y="762" width="11.4" height="33.6" rx="3.2" fill="#fff"/><rect x="1226.2" y="763.5" width="8.4" height="30.6" rx="2" fill="none" stroke="#7fc47f" stroke-width=".7"/>
<path d="M1275.8 780.6 L1281.7 774.6 L1293.6 785.4 L1317.8 756.3 L1324 762.2 L1294.6 800.4 Z" fill="#fff"/>
</svg>
</div>
</body></html>
